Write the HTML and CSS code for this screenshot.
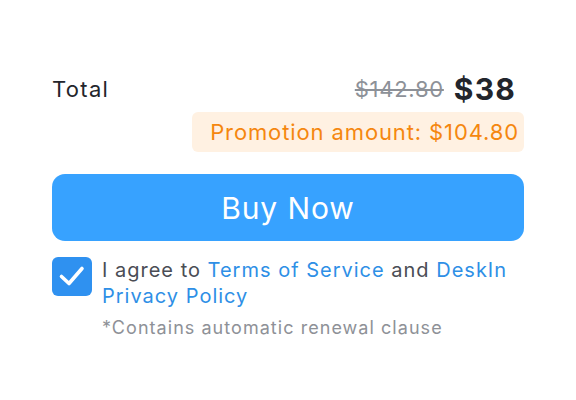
FILE: index.html
```html
<!DOCTYPE html>
<html>
<head>
<meta charset="utf-8">
<link rel="stylesheet" href="styles.css">
</head>
<body>
<div class="panel">
  <div class="total-row">
    <span class="total-label">Total</span>
    <span class="prices">
      <span class="old-price">$142.80</span>
      <span class="new-price">$38</span>
    </span>
  </div>
  <div class="promo-row">
    <span class="promo">Promotion amount: $104.80</span>
  </div>
  <button class="buy">Buy Now</button>
  <div class="agree">
    <span class="check">
      <svg width="40" height="39" viewBox="0 0 40 39"><path d="M9.5 19.5 L17 26.5 L30 11.5" fill="none" stroke="#fff" stroke-width="3.6" stroke-linecap="round" stroke-linejoin="round"/></svg>
    </span>
    <div class="agree-text">
      <p class="terms">I agree to <a>Terms of Service</a> and <a>DeskIn Privacy Policy</a></p>
      <p class="note">*Contains automatic renewal clause</p>
    </div>
  </div>
</div>
</body>
</html>
```
FILE: styles.css
```css
html, body {
  margin: 0;
  padding: 0;
  background: #ffffff;
}
body {
  font-family: Inter, "Noto Sans", sans-serif;
  letter-spacing: 0.045em;
}
.panel {
  padding: 70px 52px 0 52px;
}
.total-row {
  display: flex;
  justify-content: space-between;
  align-items: center;
  height: 38px;
}
.total-label {
  font-size: 22px;
  letter-spacing: 0.06em;
  color: #23252b;
}
.prices {
  display: flex;
  align-items: center;
  gap: 10px;
  margin-right: 8px;
}
.old-price {
  font-size: 22px;
  color: #8d9198;
  text-decoration: line-through;
}
.new-price {
  font-size: 30px;
  font-weight: 700;
  color: #22252c;
  letter-spacing: 0.04em;
}
.promo-row {
  display: flex;
  justify-content: flex-end;
  margin-top: 4px;
}
.promo {
  background: #fff1e2;
  color: #f5870f;
  font-size: 22px;
  letter-spacing: 0.04em;
  line-height: 40px;
  padding: 0 5px 0 18px;
  border-radius: 6px;
}
.buy {
  display: block;
  width: 100%;
  height: 67px;
  margin-top: 22px;
  border: none;
  border-radius: 13px;
  background: #37a2ff;
  color: #ffffff;
  font-family: Inter, "Noto Sans", sans-serif;
  font-size: 30px;
  letter-spacing: 0.03em;
}
.agree {
  display: flex;
  gap: 10px;
  margin-top: 16px;
}
.check {
  flex: none;
  width: 40px;
  height: 39px;
  border-radius: 6px;
  background: #2f91f0;
  display: flex;
}
.agree-text p {
  margin: 0;
}
.terms {
  font-size: 20px;
  line-height: 26px;
  letter-spacing: 0.05em;
  color: #4a4d55;
}
.terms a {
  color: #2e8fe6;
}
.note {
  margin-top: 7px !important;
  font-size: 18px;
  line-height: 24px;
  letter-spacing: 0.058em;
  color: #8e9197;
}
```
